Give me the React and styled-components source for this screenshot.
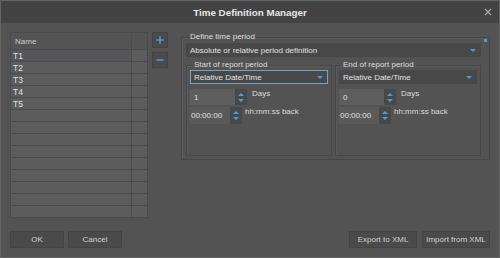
import React from "react";
import styled, { createGlobalStyle } from "styled-components";

const GlobalStyle = createGlobalStyle`
  html, body {
    margin: 0;
    padding: 0;
    background: #535353;
  }
  * {
    box-sizing: border-box;
  }
`;

const Window = styled.div`
  width: 500px;
  height: 258px;
  border: 1px solid #646464;
  background: #535353;
  display: flex;
  flex-direction: column;
  font-family: "Liberation Sans", Arial, sans-serif;
  font-size: 8px;
  color: #dcdcdc;
  overflow: hidden;
`;

const TitleBar = styled.div`
  height: 22px;
  background: #434343;
  display: grid;
  grid-template-columns: 1fr auto 1fr;
  align-items: center;
`;

const Title = styled.div`
  font-weight: bold;
  font-size: 9.8px;
  color: #e6e6e6;
  padding-top: 1px;
`;

const Close = styled.div`
  justify-self: end;
  margin-right: 5px;
  width: 12px;
  height: 12px;
  display: flex;
  align-items: center;
  justify-content: center;
`;

const Main = styled.div`
  display: flex;
  align-items: flex-start;
  padding: 9px 9px 0 9px;
`;

const Table = styled.div`
  width: 138px;
  height: 186px;
  border: 1px solid #4a4a4a;
  background: #5c5c5c;
  display: flex;
  flex-direction: column;
  overflow: hidden;
`;

const Row = styled.div`
  display: grid;
  grid-template-columns: 120px 1fr;
  height: ${(p) => (p.$header ? "17px" : "12px")};
  flex-shrink: 0;
  border-bottom: 1px solid #4b4b4b;
  background: ${(p) => (p.$header ? "#545454" : "#5c5c5c")};
`;

const Cell = styled.div`
  display: flex;
  align-items: center;
  padding-left: ${(p) => (p.$header ? "4px" : "2px")};
  font-size: ${(p) => (p.$header ? "8px" : "8.5px")};
  color: ${(p) => (p.$header ? "#c9c9c9" : "#e2e2e2")};
  background: ${(p) => (p.$selected ? "#56565a" : "transparent")};
  & + & {
    border-left: 1px solid #4b4b4b;
  }
`;

const SideButtons = styled.div`
  display: flex;
  flex-direction: column;
  gap: 4px;
  margin-left: 4px;
`;

const IconButton = styled.div`
  width: 16px;
  height: 16px;
  background: #4a4a4a;
  border: 1px solid #434343;
  display: flex;
  align-items: center;
  justify-content: center;
`;

const Group = styled.fieldset`
  margin: 0;
  margin-left: ${(p) => p.$ml || 0}px;
  border: 1px solid #474747;
  box-shadow: inset 1px 1px 0 #5a5a5a;
  padding: ${(p) => p.$pad};
  width: ${(p) => p.$w}px;
  position: relative;
  display: flex;
  flex-direction: column;
`;

const Legend = styled.legend`
  padding: 0 1px;
  margin-left: 3px;
  font-size: 8px;
  line-height: 10px;
  color: #dcdcdc;
`;

const Marker = styled.div`
  position: absolute;
  right: 2px;
  top: -3px;
  width: 3px;
  height: 3px;
  background: #4c9be0;
`;

const Select = styled.div`
  height: 14px;
  width: ${(p) => (p.$w ? `${p.$w}px` : "auto")};
  background: #484848;
  border: 1px solid ${(p) => (p.$focus ? "#6ba7c4" : "#474747")};
  display: flex;
  align-items: center;
  justify-content: space-between;
  padding: 0 4px 0 3px;
  margin-top: ${(p) => p.$mt || 0}px;
  color: #e2e2e2;
`;

const Arrow = styled.div`
  width: 0;
  height: 0;
  border-left: 3px solid transparent;
  border-right: 3px solid transparent;
  border-top: 3px solid #4c9be0;
`;

const SubGroups = styled.div`
  display: flex;
  gap: 3px;
  margin-top: 3px;
`;

const SpinRow = styled.div`
  display: flex;
  align-items: flex-start;
  margin-top: ${(p) => p.$mt}px;
`;

const SpinBox = styled.div`
  display: flex;
  height: ${(p) => p.$h}px;
`;

const SpinText = styled.div`
  width: ${(p) => p.$w}px;
  background: ${(p) => p.$bg};
  display: flex;
  align-items: center;
  padding-left: ${(p) => p.$pl}px;
  color: #e0e0e0;
`;

const Spinner = styled.div`
  width: 12px;
  background: #484848;
  display: flex;
  flex-direction: column;
  align-items: center;
  justify-content: center;
  gap: 3px;
`;

const TriUp = styled.div`
  width: 0;
  height: 0;
  border-left: 3px solid transparent;
  border-right: 3px solid transparent;
  border-bottom: 3px solid #4c9be0;
`;

const TriDown = styled(TriUp)`
  border-bottom: none;
  border-top: 3px solid #4c9be0;
`;

const SpinLabel = styled.div`
  margin-left: ${(p) => p.$ml}px;
  color: #dcdcdc;
`;

const Footer = styled.div`
  display: flex;
  justify-content: space-between;
  padding: 0 9px;
  margin-top: 13px;
`;

const ButtonGroup = styled.div`
  display: flex;
  gap: ${(p) => p.$gap}px;
`;

const Button = styled.div`
  width: ${(p) => p.$w}px;
  height: 17px;
  background: #4a4a4a;
  border: 1px solid #444444;
  display: flex;
  align-items: center;
  justify-content: center;
  color: #d2d2d2;
`;

const names = ["T1", "T2", "T3", "T4", "T5"];

function Spin({ value, textW, bg, h, label, labelMl, pl }) {
  return (
    <SpinRow $mt={h === 16 ? 5 : 2}>
      <SpinBox $h={h}>
        <SpinText $w={textW} $bg={bg} $pl={pl}>
          {value}
        </SpinText>
        <Spinner>
          <TriUp />
          <TriDown />
        </Spinner>
      </SpinBox>
      <SpinLabel $ml={labelMl}>{label}</SpinLabel>
    </SpinRow>
  );
}

function Period({ title, width, focus, value }) {
  return (
    <Group $w={width} $pad="0 3px 31px 3px">
      <Legend>{title}</Legend>
      <Select $w={138} $focus={focus}>
        Relative Date/Time
        <Arrow />
      </Select>
      <Spin value={value} textW={45} bg="#5e5e5e" h={16} label="Days" labelMl={5} pl={4} />
      <Spin value="00:00:00" textW={40} bg="#5a5a5a" h={17} label="hh:mm:ss back" labelMl={3} pl={1} />
    </Group>
  );
}

export default function App() {
  const rows = [];
  for (let i = 0; i < 14; i++) rows.push(names[i] || "");

  return (
    <>
      <GlobalStyle />
      <Window>
        <TitleBar>
          <span />
          <Title>Time Definition Manager</Title>
          <Close>
            <svg width="8" height="8" viewBox="0 0 8 8">
              <path d="M1 1L7 7M7 1L1 7" stroke="#a8a8a8" strokeWidth="1.2" />
            </svg>
          </Close>
        </TitleBar>

        <Main>
          <Table>
            <Row $header>
              <Cell $header>Name</Cell>
              <Cell $header />
            </Row>
            {rows.map((name, i) => (
              <Row key={i}>
                <Cell $selected={i === 0}>{name}</Cell>
                <Cell />
              </Row>
            ))}
          </Table>

          <SideButtons>
            <IconButton>
              <svg width="8" height="8" viewBox="0 0 8 8">
                <path d="M4 0.5V7.5M0.5 4H7.5" stroke="#4c9be0" strokeWidth="1.6" />
              </svg>
            </IconButton>
            <IconButton>
              <svg width="8" height="8" viewBox="0 0 8 8">
                <path d="M0.5 4H7.5" stroke="#4c9be0" strokeWidth="1.6" />
              </svg>
            </IconButton>
          </SideButtons>

          <Group $w={308} $ml={13} $pad="0 8px 3px 4px">
            <Legend>Define time period</Legend>
            <Marker />
            <Select $mt={1}>
              Absolute or relative period definition
              <Arrow />
            </Select>
            <SubGroups>
              <Period title="Start of report period" width={146} focus value="1" />
              <Period title="End of report period" width={145} value="0" />
            </SubGroups>
          </Group>
        </Main>

        <Footer>
          <ButtonGroup $gap={4}>
            <Button $w={54}>OK</Button>
            <Button $w={54}>Cancel</Button>
          </ButtonGroup>
          <ButtonGroup $gap={5}>
            <Button $w={68}>Export to XML</Button>
            <Button $w={68}>Import from XML</Button>
          </ButtonGroup>
        </Footer>
      </Window>
    </>
  );
}
